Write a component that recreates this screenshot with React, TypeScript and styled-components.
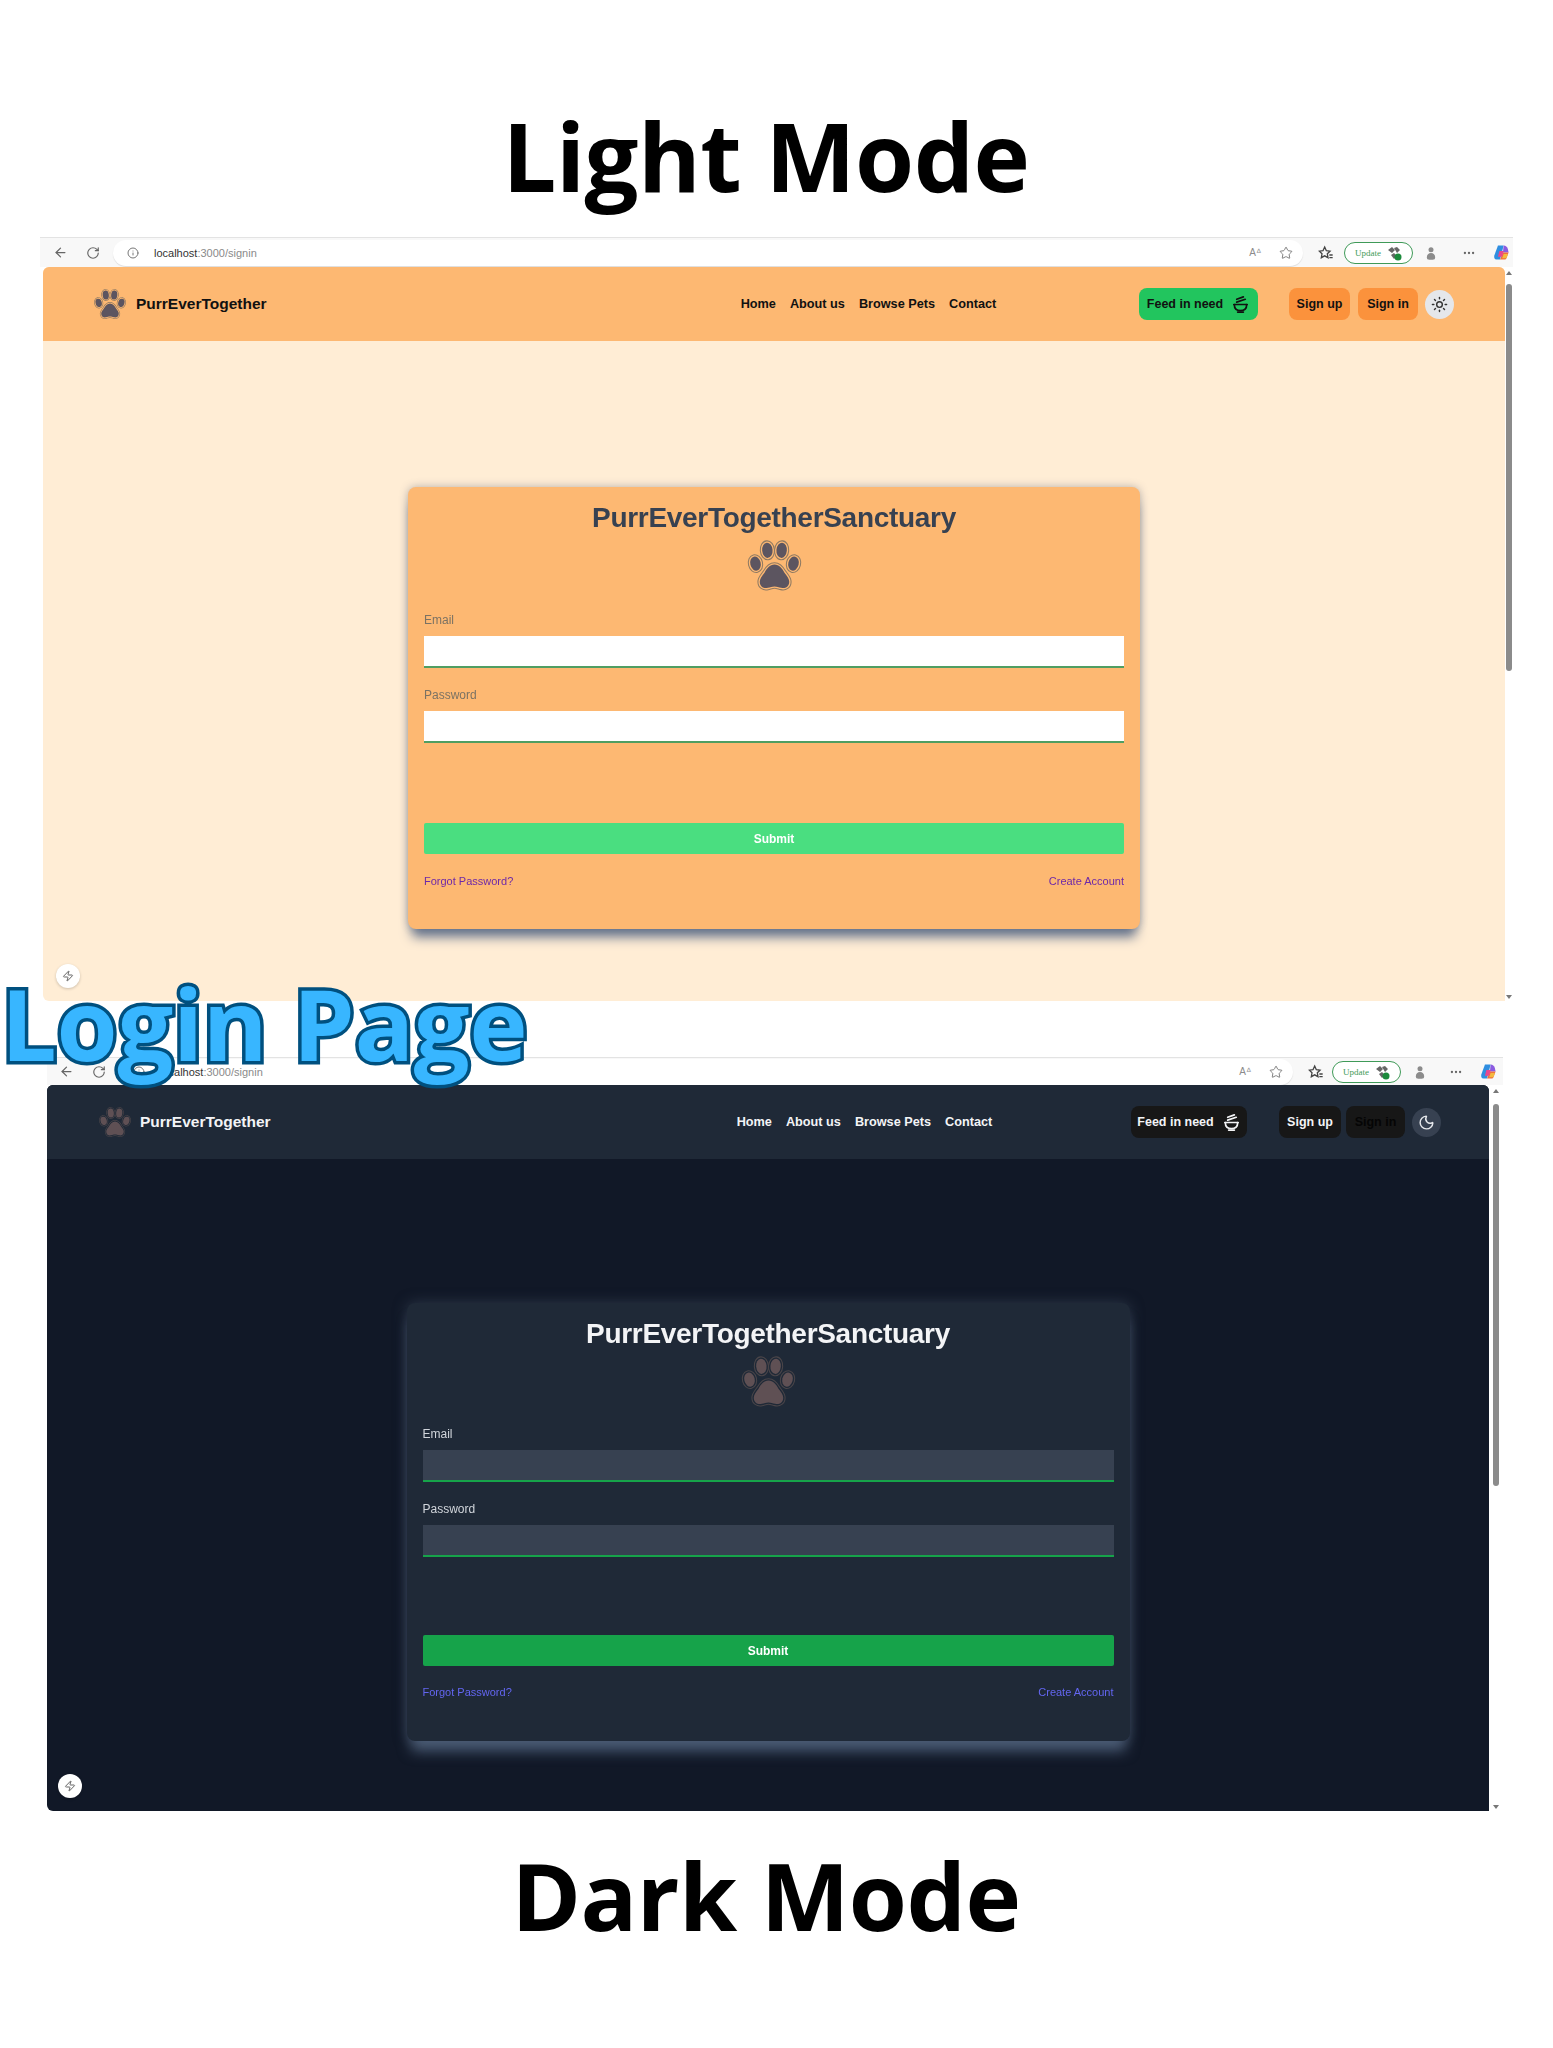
import React from 'react';
import styled, { createGlobalStyle } from 'styled-components';
import { ArrowLeft, RotateCw, Info, Star, Moon, Sun, Zap, Ellipsis } from 'lucide-react';

const GlobalStyle = createGlobalStyle`
  html, body { margin: 0; padding: 0; background: #fff; }
  * { box-sizing: border-box; }
`;

const Page = styled.div`
  position: relative;
  width: 1553px;
  height: 2048px;
  overflow: hidden;
  background: #fff;
  font-family: "Liberation Sans", Arial, sans-serif;
`;

const Heading = styled.h1<{ $top: number; $bottom: number; $size: number }>`
  margin: ${(p) => p.$top}px 21px ${(p) => p.$bottom}px 0;
  height: 120px;
  line-height: 120px;
  text-align: center;
  font-family: "Open Sans", sans-serif;
  font-size: ${(p) => p.$size}px;
  font-weight: 700;
  letter-spacing: -0.5px;
  color: #000;
`;

const LoginBanner = styled.div`
  position: absolute;
  left: 1px;
  top: 963px;
  z-index: 5;
  font-family: "Open Sans", sans-serif;
  font-size: 98.8px;
  line-height: 120px;
  font-weight: 700;
  letter-spacing: -0.3px;
  color: #38b6ff;
  -webkit-text-stroke: 7px #00507f;
  paint-order: stroke fill;
  white-space: nowrap;
`;

const Win = styled.section<{ $dark?: boolean }>`
  position: relative;
  margin-left: ${(p) => (p.$dark ? 47 : 40)}px;
  width: ${(p) => (p.$dark ? 1456 : 1473)}px;
  height: ${(p) => (p.$dark ? 754 : 764)}px;
  margin-top: ${(p) => (p.$dark ? 56 : 0)}px;
  display: flex;
  flex-direction: column;
  filter: blur(0.5px);
`;

const Toolbar = styled.div<{ $dark?: boolean }>`
  flex: 0 0 ${(p) => (p.$dark ? 28 : 30)}px;
  display: flex;
  align-items: center;
  color: #555;
  background: #f8f8f8;
  border-top: 1px solid #e3e3e3;
  padding-left: ${(p) => (p.$dark ? 12 : 13)}px;
`;

const ToolIcon = styled.span<{ $gap?: number }>`
  display: inline-flex;
  align-items: center;
  margin-left: ${(p) => p.$gap ?? 0}px;
  color: #666;
`;

const AddressBar = styled.div<{ $dark?: boolean }>`
  margin-left: 13px;
  width: ${(p) => (p.$dark ? 1174 : 1190)}px;
  height: 26px;
  padding: 0 10px 0 14px;
  display: flex;
  align-items: center;
  background: #fff;
  border-radius: 13px;
  box-shadow: 0 1px 1px #ddd;
`;

const Url = styled.span`
  margin-left: 15px;
  font-size: 11px;
  color: #8a8a8a;
  b { font-weight: 400; color: #333; }
`;

const ReadAloud = styled.span`
  margin-left: auto;
  font-size: 10px;
  color: #8b8b8b;
`;

const UpdatePill = styled.div<{ $dark?: boolean }>`
  margin-left: ${(p) => (p.$dark ? 8 : 10)}px;
  width: 69px;
  height: 22px;
  display: flex;
  align-items: center;
  justify-content: center;
  gap: 5px;
  border: 1px solid #3f9a58;
  border-radius: 11px;
  background: #fff;
  color: #3f9a58;
  font-family: "Liberation Serif", serif;
  font-size: 9px;
`;

const Viewport = styled.div<{ $dark?: boolean }>`
  flex: 1;
  display: flex;
  padding-left: ${(p) => (p.$dark ? 0 : 3)}px;
  min-height: 0;
`;

const Screen = styled.div<{ $dark?: boolean }>`
  position: relative;
  flex: 1;
  display: flex;
  flex-direction: column;
  background: ${(p) => (p.$dark ? '#111827' : '#ffedd5')};
  border-radius: 6px 6px 0 6px;
  overflow: hidden;
`;

const Scrollbar = styled.div<{ $dark?: boolean }>`
  flex: 0 0 ${(p) => (p.$dark ? 14 : 8)}px;
  display: flex;
  flex-direction: column;
  align-items: center;
  justify-content: space-between;
  padding: 4px 0 2px;
  background: #fff;
`;

const Arrow = styled.span<{ $down?: boolean }>`
  width: 0;
  height: 0;
  border-left: 3px solid transparent;
  border-right: 3px solid transparent;
  border-${(p) => (p.$down ? 'top' : 'bottom')}: 4px solid #777;
`;

const Thumb = styled.div<{ $dark?: boolean }>`
  width: 6px;
  height: ${(p) => (p.$dark ? 382 : 387)}px;
  margin-top: ${(p) => (p.$dark ? 11 : 9)}px;
  margin-bottom: auto;
  background: #8b8b8b;
  border-radius: 3px;
`;

const Nav = styled.nav<{ $dark?: boolean }>`
  flex: 0 0 74px;
  display: flex;
  align-items: center;
  padding: 0 ${(p) => (p.$dark ? 48 : 51)}px 0 ${(p) => (p.$dark ? 51 : 50)}px;
  background: ${(p) => (p.$dark ? '#1f2937' : '#fdb872')};
  color: ${(p) => (p.$dark ? '#f3f4f6' : '#111')};
`;

const Brand = styled.div<{ $dark?: boolean }>`
  display: flex;
  align-items: center;
  gap: ${(p) => (p.$dark ? 8 : 9)}px;
  font-size: 15.5px;
  font-weight: 700;
`;

const NavLinks = styled.div<{ $dark?: boolean }>`
  margin-left: ${(p) => (p.$dark ? 466 : 474)}px;
  display: flex;
  gap: 14px;
  font-size: 12.7px;
  font-weight: 700;
`;

const NavActions = styled.div`
  margin-left: auto;
  display: flex;
  align-items: center;
`;

const Pill = styled.button<{ $bg: string; $color: string; $width: number; $gap?: number }>`
  width: ${(p) => p.$width}px;
  height: 32px;
  margin-left: ${(p) => p.$gap ?? 0}px;
  display: flex;
  align-items: center;
  justify-content: center;
  gap: 8px;
  border: 0;
  border-radius: 8px;
  padding: 0;
  background: ${(p) => p.$bg};
  color: ${(p) => p.$color};
  font-family: inherit;
  font-size: 12.5px;
  font-weight: 700;
`;

const ThemeDot = styled.span<{ $dark?: boolean }>`
  width: 29px;
  height: 29px;
  margin-left: 7px;
  display: flex;
  align-items: center;
  justify-content: center;
  border-radius: 50%;
  background: ${(p) => (p.$dark ? '#374151' : '#e5e7eb')};
  color: ${(p) => (p.$dark ? '#e5e7eb' : '#333')};
`;

const Main = styled.main<{ $dark?: boolean }>`
  flex: 1;
  display: flex;
  justify-content: center;
  align-items: flex-start;
  padding-top: ${(p) => (p.$dark ? 144 : 146)}px;
`;

const Card = styled.div<{ $dark?: boolean }>`
  width: ${(p) => (p.$dark ? 723 : 732)}px;
  display: flex;
  flex-direction: column;
  padding: 15px 16px ${(p) => (p.$dark ? 41 : 40)}px;
  border-radius: 8px;
  background: ${(p) => (p.$dark ? '#1f2937' : '#fdb872')};
  box-shadow: ${(p) =>
    p.$dark
      ? '0 14px 14px -4px #4b5c75, 0 0 14px rgba(71, 85, 105, 0.5)'
      : '0 12px 12px -4px #65738c, 0 0 8px rgba(90, 100, 120, 0.45)'};
`;

const Title = styled.h2<{ $dark?: boolean }>`
  margin: 0;
  line-height: 32px;
  text-align: center;
  font-size: 28px;
  font-weight: 700;
  letter-spacing: -0.3px;
  color: ${(p) => (p.$dark ? '#f3f4f6' : '#374151')};
`;

const PawBox = styled.div`
  margin-top: 3px;
  height: 57px;
  display: flex;
  justify-content: center;
`;

const Label = styled.label<{ $dark?: boolean; $top: number }>`
  display: block;
  margin-top: ${(p) => p.$top}px;
  line-height: 16px;
  font-size: 12px;
  color: ${(p) => (p.$dark ? '#d1d5db' : '#7b7263')};
`;

const Field = styled.input<{ $dark?: boolean }>`
  display: block;
  width: 100%;
  height: 32px;
  margin-top: 8px;
  border: 0;
  border-bottom: 2px solid ${(p) => (p.$dark ? '#16a34a' : '#4f9e62')};
  background: ${(p) => (p.$dark ? '#374151' : '#fff')};
`;

const Submit = styled.button<{ $dark?: boolean }>`
  height: 31px;
  margin-top: ${(p) => (p.$dark ? 78 : 80)}px;
  border: 0;
  border-radius: 2px;
  background: ${(p) => (p.$dark ? '#16a34a' : '#4ade80')};
  color: #fff;
  font-family: inherit;
  font-size: 12px;
  font-weight: 700;
`;

const LinkRow = styled.div<{ $dark?: boolean }>`
  margin-top: ${(p) => (p.$dark ? 18 : 19)}px;
  display: flex;
  justify-content: space-between;
  line-height: 16px;
  font-size: 11px;
  color: ${(p) => (p.$dark ? '#6366f1' : '#6d28a8')};
`;

const DevBadge = styled.span<{ $dark?: boolean }>`
  position: absolute;
  left: ${(p) => (p.$dark ? 11 : 13)}px;
  bottom: 13px;
  width: 24px;
  height: 24px;
  display: flex;
  align-items: center;
  justify-content: center;
  border-radius: 50%;
  background: #fff;
  color: #666;
  box-shadow: 0 1px 3px rgba(0, 0, 0, 0.2);
`;

const PawShapes = () => (
  <>
    <ellipse cx="10" cy="28" rx="5.500" ry="7.500" transform="rotate(-14 10 28)" />
    <ellipse cx="22.500" cy="14" rx="5.500" ry="8" transform="rotate(-5 22.500 14)" />
    <ellipse cx="37.500" cy="14" rx="5.500" ry="8" transform="rotate(5 37.500 14)" />
    <ellipse cx="50" cy="28" rx="5.500" ry="7.500" transform="rotate(14 50 28)" />
    <path d="M30 29c5 0 8 4 10.500 8.500 2.500 3.500 5 6 5 9.500 0 5-4 7.500-8.500 6.500-2.500-.5-4.500-1.500-7-1.500s-4.500 1-7 1.500c-4.500 1-8.500-1.500-8.500-6.500 0-3.500 2.500-6 5-9.500 2.500-4.500 5.500-8.500 10.500-8.500z" />
  </>
);

// paw from the logo: filled shape, a gap in the background colour, then a thin outer ring
const PawIcon = ({ size, fill, ring, bg }: { size: number; fill: string; ring: string; bg: string }) => (
  <svg width={size} height={size} viewBox="0 0 60 60" aria-hidden="true">
    <g fill={ring} stroke={ring} strokeWidth="5" strokeLinejoin="round">
      <PawShapes />
    </g>
    <g fill={bg} stroke={bg} strokeWidth="2.800" strokeLinejoin="round">
      <PawShapes />
    </g>
    <g fill={fill}>
      <PawShapes />
    </g>
  </svg>
);

const BowlIcon = () => (
  <svg width="19" height="19" viewBox="0 0 20 20" fill="none" stroke="currentColor" strokeWidth="1.800" strokeLinecap="round" aria-hidden="true">
    <path d="M3 10h14" />
    <path d="M3.500 10c0 4 2.500 6.500 6.500 6.500s6.500-2.500 6.500-6.500" />
    <path d="M7 18h6" />
    <path d="M6 7.500l9-3M6 4.500l7-2.500" />
  </svg>
);

const CopilotIcon = () => (
  <svg width="17" height="17" viewBox="0 0 24 24" aria-hidden="true">
    <path d="M7 2h8l-5 20H5C2 22 1 19 2 16z" fill="#2f8ee0" />
    <path d="M15 2c3 0 5 2 6 5l1 5h-8z" fill="#8a5be0" />
    <path d="M14 12h8l-3 8c-1 2-2 2-4 2h-5z" fill="#f0703a" />
    <path d="M9 10h6l-2 8H7z" fill="#e8478f" />
    <path d="M15 14h6l-2 6h-6z" fill="#f4b93e" />
  </svg>
);

const FavoritesIcon = () => (
  <svg width="16" height="16" viewBox="0 0 24 24" fill="none" stroke="#444" strokeWidth="2" aria-hidden="true">
    <path d="M10 3l2.500 5.500 5.500.700-4 4 1 5.800-5-2.800-5 2.800 1-5.800-4-4 5.500-.700z" />
    <path d="M17 15h5M17 19h5" />
  </svg>
);

const ProfileIcon = () => (
  <svg width="10" height="14" viewBox="0 0 12 16" fill="#8c8c8c" aria-hidden="true">
    <circle cx="6" cy="4" r="3" />
    <path d="M1 13c0-3 2-5 5-5s5 2 5 5-2 3-5 3-5 0-5-3z" />
  </svg>
);

const UpdateBadge = () => (
  <svg width="16" height="16" viewBox="0 0 16 16" aria-hidden="true">
    <path d="M2 5l4-3 3 3-3 3zM8 3l3-1 3 3-3 3zM5 10l3-2 3 3-3 3z" fill="#666" />
    <circle cx="12" cy="12" r="3.500" fill="#1c8a3c" />
  </svg>
);

const BrowserBar = ({ dark }: { dark?: boolean }) => (
  <Toolbar $dark={dark}>
    <ToolIcon>
      <ArrowLeft size={15} />
    </ToolIcon>
    <ToolIcon $gap={18}>
      <RotateCw size={14} />
    </ToolIcon>
    <AddressBar $dark={dark}>
      <Info size={12} color="#777" />
      <Url>
        <b>localhost</b>:3000/signin
      </Url>
      <ReadAloud>Aᐞ</ReadAloud>
      <ToolIcon $gap={18}>
        <Star size={14} strokeWidth={1.4} />
      </ToolIcon>
    </AddressBar>
    <ToolIcon $gap={15}>
      <FavoritesIcon />
    </ToolIcon>
    <UpdatePill $dark={dark}>
      Update
      <UpdateBadge />
    </UpdatePill>
    <ToolIcon $gap={dark ? 14 : 13}>
      <ProfileIcon />
    </ToolIcon>
    <ToolIcon $gap={dark ? 24 : 26}>
      <Ellipsis size={14} />
    </ToolIcon>
    <ToolIcon $gap={17}>
      <CopilotIcon />
    </ToolIcon>
  </Toolbar>
);

const LoginWindow = ({ dark }: { dark?: boolean }) => {
  const surface = dark ? '#1f2937' : '#fdb872';
  const pawFill = dark ? '#5f5054' : '#5c5560';
  const pawRing = dark ? '#4a4549' : '#8f7a63';
  return (
    <Win $dark={dark}>
      <BrowserBar dark={dark} />
      <Viewport $dark={dark}>
        <Screen $dark={dark}>
          <Nav $dark={dark}>
            <Brand $dark={dark}>
              <PawIcon size={34} fill={pawFill} ring={pawRing} bg={surface} />
              PurrEverTogether
            </Brand>
            <NavLinks $dark={dark}>
              <span>Home</span>
              <span>About us</span>
              <span>Browse Pets</span>
              <span>Contact</span>
            </NavLinks>
            <NavActions>
              <Pill $bg={dark ? '#171717' : '#22c55e'} $color={dark ? '#f3f4f6' : '#111'} $width={dark ? 116 : 119}>
                Feed in need
                <BowlIcon />
              </Pill>
              <Pill $bg={dark ? '#171717' : '#fb923c'} $color={dark ? '#f3f4f6' : '#111'} $width={dark ? 62 : 61} $gap={dark ? 32 : 31}>
                Sign up
              </Pill>
              <Pill $bg={dark ? '#171717' : '#fb923c'} $color={dark ? '#050505' : '#111'} $width={dark ? 59 : 60} $gap={dark ? 5 : 8}>
                Sign in
              </Pill>
              <ThemeDot $dark={dark}>{dark ? <Moon size={17} /> : <Sun size={17} />}</ThemeDot>
            </NavActions>
          </Nav>
          <Main $dark={dark}>
            <Card $dark={dark}>
              <Title $dark={dark}>PurrEverTogetherSanctuary</Title>
              <PawBox>
                <PawIcon size={57} fill={pawFill} ring={pawRing} bg={surface} />
              </PawBox>
              <Label $dark={dark} $top={dark ? 16 : 18}>Email</Label>
              <Field $dark={dark} type="email" />
              <Label $dark={dark} $top={19}>Password</Label>
              <Field $dark={dark} type="password" />
              <Submit $dark={dark}>Submit</Submit>
              <LinkRow $dark={dark}>
                <span>Forgot Password?</span>
                <span>Create Account</span>
              </LinkRow>
            </Card>
          </Main>
          <DevBadge $dark={dark}>
            <Zap size={12} />
          </DevBadge>
        </Screen>
        <Scrollbar $dark={dark}>
          <Arrow />
          <Thumb $dark={dark} />
          <Arrow $down />
        </Scrollbar>
      </Viewport>
    </Win>
  );
};

export default function App() {
  return (
    <Page>
      <GlobalStyle />
      <Heading $top={95} $bottom={22} $size={95.5}>Light Mode</Heading>
      <LoginWindow />
      <LoginBanner>Login Page</LoginBanner>
      <LoginWindow dark />
      <Heading $top={24} $bottom={0} $size={94}>Dark Mode</Heading>
    </Page>
  );
}
